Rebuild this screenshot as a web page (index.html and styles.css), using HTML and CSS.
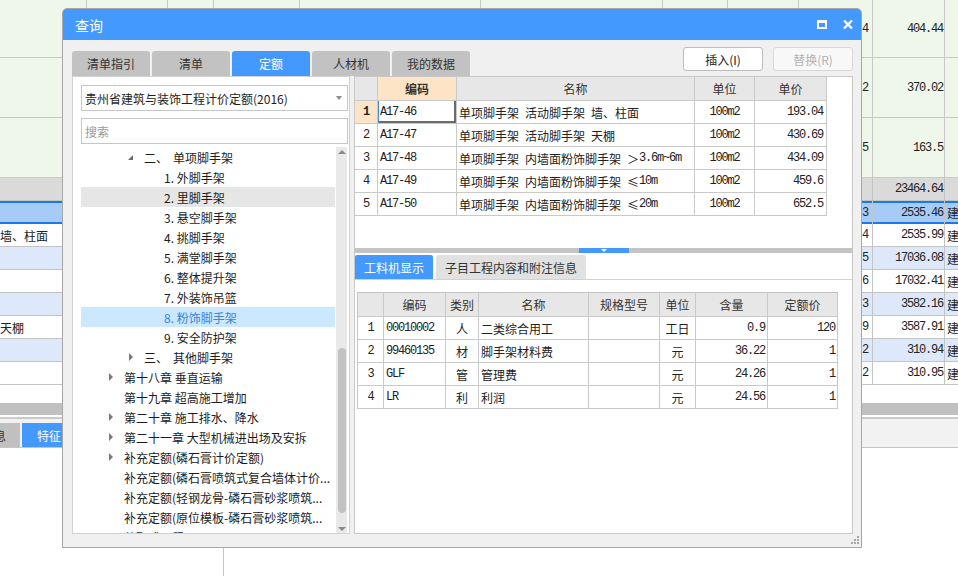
FILE: index.html
```html
<!DOCTYPE html>
<html lang="zh-CN">
<head>
<meta charset="utf-8">
<title>查询</title>
<link rel="stylesheet" href="styles.css">
</head>
<body>
<div class="bg">
  <div class="grow r1"><div></div><div></div><div></div><div></div><div></div><div></div><div></div><div></div><div class="gn mono">4</div><div class="gv mono">404.44</div><div></div></div>
  <div class="grow r2"><div></div><div></div><div></div><div></div><div></div><div></div><div></div><div></div><div class="gn mono">2</div><div class="gv mono">370.02</div><div></div></div>
  <div class="grow r2"><div></div><div></div><div></div><div></div><div></div><div></div><div></div><div></div><div class="gn mono">5</div><div class="gv mono">163.5</div><div></div></div>

  <div class="trow tot"><div class="ca"></div><div class="cb"></div><div class="cc mono">23464.64</div><div class="cd"></div></div>
  <div class="trow sel"><div class="ca"></div><div class="cb mono">3</div><div class="cc mono">2535.46</div><div class="cd">建</div></div>
  <div class="trow"><div class="ca">墙、柱面</div><div class="cb mono">4</div><div class="cc mono">2535.99</div><div class="cd">建</div></div>
  <div class="trow alt"><div class="ca"></div><div class="cb mono">5</div><div class="cc mono">17036.08</div><div class="cd">建</div></div>
  <div class="trow"><div class="ca"></div><div class="cb mono">6</div><div class="cc mono">17032.41</div><div class="cd">建</div></div>
  <div class="trow alt"><div class="ca"></div><div class="cb mono">3</div><div class="cc mono">3582.16</div><div class="cd">建</div></div>
  <div class="trow"><div class="ca">天棚</div><div class="cb mono">9</div><div class="cc mono">3587.91</div><div class="cd">建</div></div>
  <div class="trow alt"><div class="ca"></div><div class="cb mono">2</div><div class="cc mono">310.94</div><div class="cd">建</div></div>
  <div class="trow"><div class="ca"></div><div class="cb mono">2</div><div class="cc mono">310.95</div><div class="cd">建</div></div>

  <div class="bgap"></div>
  <div class="hbar"></div>
  <div class="hgap"></div>
  <div class="btabs">
    <div class="btab"><span class="cut">息</span></div>
    <div class="btab on">特征</div>
  </div>
  <div class="barea"><div class="bleft"></div></div>
</div>

<div class="dialog">
  <div class="titlebar">
    <span class="ttl">查询</span>
    <span class="tbi max"><svg width="10" height="9" viewBox="0 0 10 9"><rect x="0" y="0" width="10" height="3" fill="#fff"/><rect x="1" y="1" width="8" height="7" fill="none" stroke="#fff" stroke-width="2"/></svg></span>
    <span class="tbi cls"><svg width="10" height="9" viewBox="0 0 10 9"><path d="M1 0.5 L9 8.5 M9 0.5 L1 8.5" stroke="#fff" stroke-width="2.2" fill="none"/></svg></span>
  </div>
  <div class="dbody">
    <div class="toprow">
      <div class="tab">清单指引</div>
      <div class="tab">清单</div>
      <div class="tab on">定额</div>
      <div class="tab">人材机</div>
      <div class="tab">我的数据</div>
      <div class="btns">
        <button class="btn">插入(I)</button>
        <button class="btn dis">替换(R)</button>
      </div>
    </div>
    <div class="main">
      <div class="lp">
        <div class="ddbox"><span>贵州省建筑与装饰工程计价定额(2016)</span><i class="dd"></i></div>
        <div class="search">搜索</div>
        <div class="tree">
          <div class="tlist">
            <div class="node l1"><i class="tw ex"></i><span>二、</span><span class="sp">单项脚手架</span></div>
            <div class="node l2"><i class="tw"></i><span>1. 外脚手架</span></div>
            <div class="node l2 hov"><i class="tw"></i><span>2. 里脚手架</span></div>
            <div class="node l2"><i class="tw"></i><span>3. 悬空脚手架</span></div>
            <div class="node l2"><i class="tw"></i><span>4. 挑脚手架</span></div>
            <div class="node l2"><i class="tw"></i><span>5. 满堂脚手架</span></div>
            <div class="node l2"><i class="tw"></i><span>6. 整体提升架</span></div>
            <div class="node l2"><i class="tw"></i><span>7. 外装饰吊篮</span></div>
            <div class="node l2 cur"><i class="tw"></i><span>8. 粉饰脚手架</span></div>
            <div class="node l2"><i class="tw"></i><span>9. 安全防护架</span></div>
            <div class="node l1"><i class="tw co"></i><span>三、</span><span class="sp">其他脚手架</span></div>
            <div class="node l0"><i class="tw co"></i><span>第十八章 垂直运输</span></div>
            <div class="node l0"><i class="tw"></i><span>第十九章 超高施工增加</span></div>
            <div class="node l0"><i class="tw co"></i><span>第二十章 施工排水、降水</span></div>
            <div class="node l0"><i class="tw co"></i><span>第二十一章 大型机械进出场及安拆</span></div>
            <div class="node l0"><i class="tw co"></i><span>补充定额(磷石膏计价定额)</span></div>
            <div class="node l0"><i class="tw"></i><span>补充定额(磷石膏喷筑式复合墙体计价...</span></div>
            <div class="node l0"><i class="tw"></i><span>补充定额(轻钢龙骨-磷石膏砂浆喷筑...</span></div>
            <div class="node l0"><i class="tw"></i><span>补充定额(原位模板-磷石膏砂浆喷筑...</span></div>
            <div class="node l0"><i class="tw"></i><span>装配式工程</span></div>
          </div>
          <div class="sb"><i class="sb-up"></i><i class="sb-th"></i><i class="sb-dn"></i></div>
        </div>
      </div>
      <div class="rp">
        <div class="upper">
          <div class="t1">
            <div class="h"></div><div class="h pk">编码</div><div class="h">名称</div><div class="h">单位</div><div class="h">单价</div>

            <div class="rn pk mono">1</div><div class="L mono focus">A17-46</div><div class="L">单项脚手架&ensp;活动脚手架&ensp;墙、柱面</div><div class="C mono">100m2</div><div class="R mono">193.04</div>
            <div class="rn mono">2</div><div class="L mono">A17-47</div><div class="L">单项脚手架&ensp;活动脚手架&ensp;天棚</div><div class="C mono">100m2</div><div class="R mono">430.69</div>
            <div class="rn mono">3</div><div class="L mono">A17-48</div><div class="L">单项脚手架&ensp;内墙面粉饰脚手架&ensp;＞<span class="mono">3.6m~6m</span></div><div class="C mono">100m2</div><div class="R mono">434.09</div>
            <div class="rn mono">4</div><div class="L mono">A17-49</div><div class="L">单项脚手架&ensp;内墙面粉饰脚手架&ensp;≤<span class="mono">10m</span></div><div class="C mono">100m2</div><div class="R mono">459.6</div>
            <div class="rn mono">5</div><div class="L mono">A17-50</div><div class="L">单项脚手架&ensp;内墙面粉饰脚手架&ensp;≤<span class="mono">20m</span></div><div class="C mono">100m2</div><div class="R mono">652.5</div>
          </div>
        </div>
        <div class="split"><div class="split-h"><i></i></div></div>
        <div class="sgap"></div>
        <div class="ltabs">
          <div class="ltab on">工料机显示</div>
          <div class="ltab">子目工程内容和附注信息</div>
        </div>
        <div class="lower">
          <div class="t2">
            <div class="h"></div><div class="h">编码</div><div class="h">类别</div><div class="h">名称</div><div class="h">规格型号</div><div class="h">单位</div><div class="h">含量</div><div class="h">定额价</div>

            <div class="C mono">1</div><div class="L mono">00010002</div><div class="C">人</div><div class="L">二类综合用工</div><div></div><div class="C">工日</div><div class="R mono">0.9</div><div class="R mono">120</div>
            <div class="C mono">2</div><div class="L mono">99460135</div><div class="C">材</div><div class="L">脚手架材料费</div><div></div><div class="C">元</div><div class="R mono">36.22</div><div class="R mono">1</div>
            <div class="C mono">3</div><div class="L mono">GLF</div><div class="C">管</div><div class="L">管理费</div><div></div><div class="C">元</div><div class="R mono">24.26</div><div class="R mono">1</div>
            <div class="C mono">4</div><div class="L mono">LR</div><div class="C">利</div><div class="L">利润</div><div></div><div class="C">元</div><div class="R mono">24.56</div><div class="R mono">1</div>
          </div>
        </div>
      </div>
    </div>
    <svg class="grip" width="8" height="8" viewBox="0 0 8 8"><rect x="6" y="0" width="2" height="2" fill="#a6a6a6"/><rect x="3" y="3" width="2" height="2" fill="#a6a6a6"/><rect x="6" y="3" width="2" height="2" fill="#a6a6a6"/><rect x="0" y="6" width="2" height="2" fill="#a6a6a6"/><rect x="3" y="6" width="2" height="2" fill="#a6a6a6"/><rect x="6" y="6" width="2" height="2" fill="#a6a6a6"/></svg>
  </div>
</div>
</body>
</html>
```

FILE: styles.css
```css
* { box-sizing: border-box; }
html, body {
  margin: 0;
  padding: 0;
  width: 958px;
  height: 576px;
  overflow: hidden;
  background: #fff;
}
body {
  position: relative;
  font-family: "Noto Sans CJK SC", "Microsoft YaHei", sans-serif;
  font-size: 12px;
  color: #222;
}
.mono {
  font-family: "Liberation Mono", "DejaVu Sans Mono", "Noto Sans CJK SC", monospace;
  font-size: 12px;
  letter-spacing: -1.2px;
}

/* ---------- background sheet ---------- */
.bg {
  display: flex;
  flex-direction: column;
  height: 576px;
}
.grow {
  display: grid;
  grid-template-columns: 87px 81px 46px 86px 181px 182px 65px 71px 74px 72px 1fr;
  background: #eef7e9;
  border-bottom: 1px solid #c8c8c8;
}
.grow.r1 { height: 58px; }
.grow.r2 { height: 60px; }
.grow > div {
  border-right: 1px solid #c8c8c8;
  display: flex;
  align-items: center;
  justify-content: flex-end;
}
.grow > div:last-child { border-right: 0; }
.grow .gn { padding-right: 4px; }
.grow .gv { padding-right: 1px; }

.trow {
  display: grid;
  grid-template-columns: 799px 74px 72px 1fr;
  height: 23px;
  background: #fff;
  border-bottom: 1px solid #c4c4c4;
}
.trow.tot { background: #dadada; }
.trow.alt { background: #dde9fb; }
.trow.sel {
  background: #a6cbf7;
  border-bottom: 0;
  box-shadow: inset 0 2px 0 #1a78ef, inset 0 -2px 0 #1a78ef;
}
.trow > div { display: flex; align-items: center; white-space: nowrap; }
.trow .ca { justify-content: flex-start; }
.trow .cb { justify-content: flex-end; padding-right: 4px; border-right: 1px solid #c4c4c4; }
.trow .cc { justify-content: flex-end; padding-right: 1px; border-right: 1px solid #c4c4c4; }
.trow .cd { padding-left: 2px; }

.bgap { height: 18px; flex: none; }
.hbar { height: 12px; flex: none; background: #c0c0c0; }
.hgap { height: 2px; flex: none; }
.btabs {
  height: 31px;
  flex: none;
  background: #f2f2f2;
  border-top: 2px solid #cacaca;
  border-bottom: 1px solid #c6c6c6;
  display: flex;
  align-items: flex-end;
  gap: 2px;
}
.btab {
  height: 24px;
  background: #c0c0c0;
  color: #333;
  display: flex;
  align-items: center;
  overflow: hidden;
  white-space: nowrap;
}
.btab:first-child { width: 20px; }
.btab .cut { margin-left: -6px; }
.btab.on { background: #4499ff; color: #fff; padding-left: 15px; width: 80px; }
.barea { flex: 1; display: flex; }
.bleft { width: 224px; border-right: 1px solid #c4c4c4; }

/* ---------- dialog ---------- */
.dialog {
  position: absolute;
  left: 62px;
  top: 8px;
  width: 800px;
  height: 540px;
  border: 1px solid #a6a6a6;
  border-radius: 5px 5px 0 0;
  overflow: hidden;
  display: flex;
  flex-direction: column;
  background: #f0f0f0;
}
.titlebar {
  height: 31px;
  flex: none;
  background: #4499ff;
  display: flex;
  align-items: center;
  padding: 0 8px 0 12px;
  color: #fff;
}
.ttl { font-size: 14px; }
.tbi { display: flex; }
.tbi.max { margin-left: auto; }
.tbi.cls { margin-left: 16px; }

.dbody {
  flex: 1;
  min-height: 0;
  position: relative;
  display: flex;
  flex-direction: column;
  padding: 0 8px 13px 9px;
}
.toprow {
  height: 36px;
  flex: none;
  display: flex;
  align-items: flex-end;
}
.tab {
  width: 78px;
  height: 25px;
  margin-right: 2px;
  background: #c2c2c2;
  color: #333;
  border-radius: 3px 3px 0 0;
  display: flex;
  align-items: center;
  justify-content: center;
}
.tab.on { background: #4499ff; color: #fff; }
.btns {
  margin-left: auto;
  align-self: flex-start;
  margin-top: 7px;
  display: flex;
  gap: 10px;
}
.btn {
  width: 80px;
  height: 24px;
  padding: 0;
  font: inherit;
  color: #222;
  background: #fff;
  border: 1px solid #bcbcbc;
  border-radius: 3px;
}
.btn.dis { color: #b3b3b3; background: #f8f8f8; border-color: #d8d8d8; }

.main {
  flex: 1;
  min-height: 0;
  display: flex;
  gap: 4px;
}

/* left panel */
.lp {
  width: 278px;
  flex: none;
  background: #fff;
  border: 1px solid #d2d2d2;
  padding: 8px 1px 0 8px;
  display: flex;
  flex-direction: column;
  min-height: 0;
  overflow: hidden;
}
.ddbox {
  height: 26px;
  flex: none;
  border: 1px solid #c6c6c6;
  padding: 0 5px 0 3px;
  display: flex;
  align-items: center;
  white-space: nowrap;
  color: #1e1e1e;
}
.dd {
  margin-left: auto;
  width: 0;
  height: 0;
  border-top: 4px solid #8c8c8c;
  border-left: 3px solid transparent;
  border-right: 3px solid transparent;
}
.search {
  height: 26px;
  flex: none;
  margin-top: 7px;
  border: 1px solid #c6c6c6;
  padding-left: 3px;
  color: #9a9a9a;
  display: flex;
  align-items: center;
}
.tree {
  flex: 1;
  min-height: 0;
  margin-top: 3px;
  display: flex;
  overflow: hidden;
}
.tlist { width: 254px; flex: none; }
.node {
  height: 20px;
  display: flex;
  align-items: center;
  white-space: nowrap;
  color: #1c1c1c;
}
.node.l0 { padding-left: 27px; }
.node.l1 { padding-left: 47px; }
.node.l2 { padding-left: 67px; }
.node.hov { background: #e6e6e6; }
.node.cur { background: #cce8ff; color: #3b84d8; }
.node .sp { margin-left: 5px; }
.tw {
  width: 16px;
  height: 20px;
  flex: none;
  position: relative;
}
.tw.co::before {
  content: "";
  position: absolute;
  left: 1px;
  top: 6px;
  border-left: 4px solid #7a7a7a;
  border-top: 4px solid transparent;
  border-bottom: 4px solid transparent;
}
.tw.ex::before {
  content: "";
  position: absolute;
  left: 0;
  top: 8px;
  border-bottom: 5px solid #6c6c6c;
  border-left: 5px solid transparent;
}
.sb {
  width: 11px;
  margin-left: 1px;
  flex: none;
  background: #e9e9e9;
  display: flex;
  flex-direction: column;
  align-items: center;
}
.sb-up {
  margin-top: 3px;
  border-bottom: 4px solid #8a8a8a;
  border-left: 4px solid transparent;
  border-right: 4px solid transparent;
}
.sb-th {
  margin-top: 194px;
  width: 8px;
  height: 165px;
  border-radius: 4px;
  background: #c2c2c2;
}
.sb-dn {
  margin-top: auto;
  margin-bottom: 2px;
  border-top: 4px solid #8a8a8a;
  border-left: 4px solid transparent;
  border-right: 4px solid transparent;
}

/* right panel */
.rp {
  flex: 1;
  min-width: 0;
  min-height: 0;
  background: #fff;
  border: 1px solid #c8c8c8;
  display: flex;
  flex-direction: column;
  overflow: hidden;
}
.upper { height: 171px; flex: none; }
.t1 {
  display: grid;
  grid-template-columns: 23px 79px 238px 60px 72px;
  width: 472px;
}
.t1 > div, .t2 > div {
  height: 23px;
  border-right: 1px solid #c9c9c9;
  border-bottom: 1px solid #c9c9c9;
  display: flex;
  align-items: center;
  white-space: nowrap;
  overflow: hidden;
}
.t1 > .h, .t2 > .h {
  height: 24px;
  background: #e7e7e7;
  color: #333;
  justify-content: center;
}
.t1 > .pk { background: #fde4c6; font-weight: bold; }
.t1 > .h.pk { background: #fde4c6; }
.t1 > .rn { justify-content: center; }
.L { padding-left: 2px; }
.C { justify-content: center; }
.R { justify-content: flex-end; padding-right: 3px; }
.t1 > .focus {
  box-shadow: inset 1px 0 0 #3d8be6, inset -2px 0 0 #6a6a6a, inset 0 -2px 0 #6a6a6a;
}

.split {
  height: 5px;
  flex: none;
  background: #c4c4c4;
  display: flex;
  justify-content: center;
}
.split-h {
  width: 50px;
  height: 5px;
  background: #4499ff;
  display: flex;
  justify-content: center;
  align-items: center;
}
.split-h i {
  border-top: 3px solid #fff;
  border-left: 3px solid transparent;
  border-right: 3px solid transparent;
}
.sgap { height: 2px; flex: none; }
.ltabs {
  height: 25px;
  flex: none;
  display: flex;
  gap: 3px;
  border-bottom: 1px solid #d2d2d2;
}
.ltab {
  width: 150px;
  height: 24px;
  background: #e1e1e1;
  color: #333;
  border-radius: 2px 2px 0 0;
  display: flex;
  align-items: center;
  justify-content: center;
}
.ltab.on { width: 78px; background: #4499ff; color: #fff; }
.lower {
  flex: 1;
  min-height: 0;
  padding: 12px 0 0 2px;
}
.t2 {
  display: grid;
  grid-template-columns: 26px 62px 33px 110px 71px 36px 72px 70px;
  width: 481px;
  border-left: 1px solid #c4c4c4;
  border-top: 1px solid #c4c4c4;
}
.t2 > .R { padding-right: 2px; }

.grip {
  position: absolute;
  right: 2px;
  bottom: 3px;
}
```
